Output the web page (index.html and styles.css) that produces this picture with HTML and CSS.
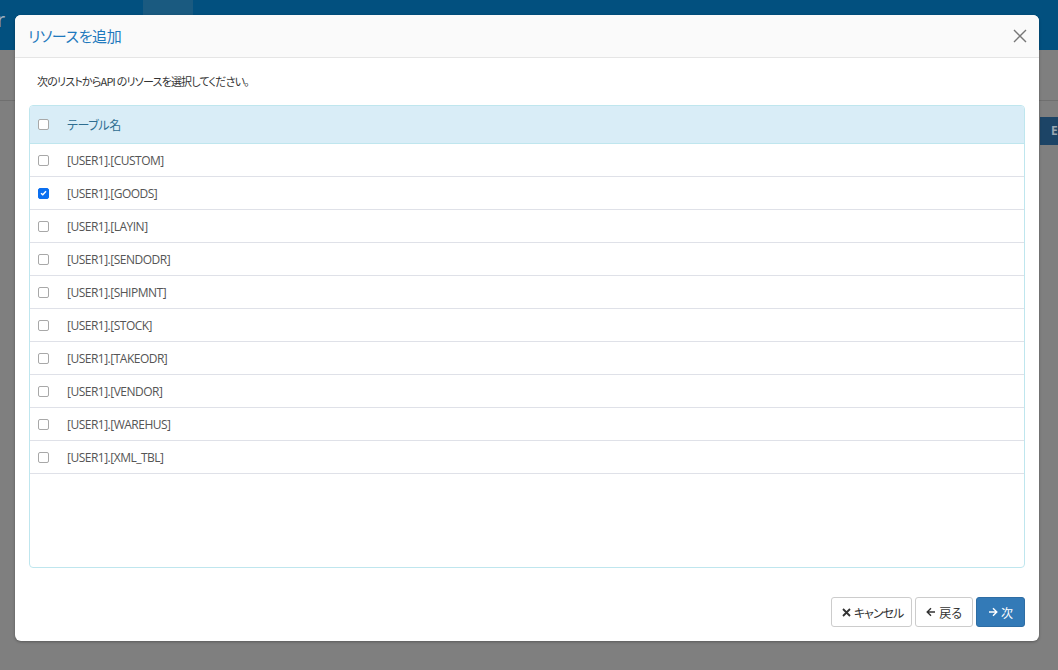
FILE: index.html
```html
<!DOCTYPE html>
<html lang="ja">
<head>
<meta charset="utf-8">
<title>リソースを追加</title>
<link rel="stylesheet" href="styles.css">
</head>
<body>
<div class="page">
  <div class="topbar">
    <span class="brand">r</span>
    <span class="tab"></span>
  </div>
  <div class="subbar"></div>
  <div class="content">
    <span class="side-btn">E</span>
  </div>
</div>

<div class="modal">
  <div class="modal-header">
    <h4 class="modal-title">リソースを追加</h4>
    <span class="close">
      <svg width="14" height="14" viewBox="0 0 14 14"><path d="M1 1L13 13M13 1L1 13" stroke="#777" stroke-width="1.4" fill="none"/></svg>
    </span>
  </div>
  <div class="modal-body">
    <p class="intro">次のリストからAPI のリソースを選択してください。</p>
    <div class="table-box">
      <div class="row head">
        <span class="cb"></span><span class="label">テーブル名</span>
      </div>
      <div class="row"><span class="cb"></span><span class="label">[USER1].[CUSTOM]</span></div>
      <div class="row"><span class="cb checked"><svg width="7" height="6" viewBox="0 0 7 6"><path d="M1 3.2L2.8 4.8L6 1.2" stroke="#fff" stroke-width="1.4" fill="none"/></svg></span><span class="label">[USER1].[GOODS]</span></div>
      <div class="row"><span class="cb"></span><span class="label">[USER1].[LAYIN]</span></div>
      <div class="row"><span class="cb"></span><span class="label">[USER1].[SENDODR]</span></div>
      <div class="row"><span class="cb"></span><span class="label">[USER1].[SHIPMNT]</span></div>
      <div class="row"><span class="cb"></span><span class="label">[USER1].[STOCK]</span></div>
      <div class="row"><span class="cb"></span><span class="label">[USER1].[TAKEODR]</span></div>
      <div class="row"><span class="cb"></span><span class="label">[USER1].[VENDOR]</span></div>
      <div class="row"><span class="cb"></span><span class="label">[USER1].[WAREHUS]</span></div>
      <div class="row"><span class="cb"></span><span class="label">[USER1].[XML_TBL]</span></div>
    </div>
  </div>
  <div class="modal-footer">
    <button class="btn btn-cancel">
      <svg width="9" height="9" viewBox="0 0 9 9"><path d="M1 1L8 8M8 1L1 8" stroke="#333" stroke-width="1.8" fill="none"/></svg><span>キャンセル</span>
    </button>
    <button class="btn">
      <svg width="10" height="10" viewBox="0 0 10 10"><path d="M9 5H1.5M5 1.2L1.2 5L5 8.8" stroke="#333" stroke-width="1.4" fill="none"/></svg><span>戻る</span>
    </button>
    <button class="btn primary">
      <svg width="10" height="10" viewBox="0 0 10 10"><path d="M1 5H8.5M5 1.2L8.8 5L5 8.8" stroke="#fff" stroke-width="1.4" fill="none"/></svg><span>次</span>
    </button>
  </div>
</div>
</body>
</html>
```

FILE: styles.css
```css
* { box-sizing: border-box; }
html, body {
  margin: 0;
  padding: 0;
  height: 100%;
}
body {
  background: #7f7f7f;
  font-family: "Open Sans", "Noto Sans CJK JP", sans-serif;
  overflow: hidden;
}
.page {
  height: 670px;
  display: flex;
  flex-direction: column;
}
.topbar {
  height: 50px;
  background: #02507f;
  display: flex;
  align-items: stretch;
}
.brand {
  color: #9db0bf;
  font-size: 20px;
  margin-left: -3px;
  line-height: 40px;
  width: 146px;
}
.tab {
  width: 50px;
  background: #1a5a80;
}
.subbar {
  height: 51px;
  border-bottom: 1px solid #6f6f6f;
}
.content {
  flex: 1;
  display: flex;
  justify-content: flex-end;
  align-items: flex-start;
  padding-top: 16px;
}
.side-btn {
  width: 18px;
  height: 28px;
  background: #1c4466;
  color: #9aa6b1;
  font-size: 12px;
  font-weight: 700;
  line-height: 28px;
  padding-left: 11px;
  overflow: hidden;
}

.modal {
  position: absolute;
  left: 15px;
  top: 15px;
  width: 1024px;
  height: 626px;
  background: #fff;
  border-radius: 6px;
  display: flex;
  flex-direction: column;
  overflow: hidden;
  box-shadow: 0 1px 3px rgba(0,0,0,0.3);
}
.modal-header {
  height: 43px;
  background: #fafafa;
  border-bottom: 1px solid #e5e5e5;
  display: flex;
  align-items: center;
  justify-content: space-between;
  padding: 0 12px 0 13px;
}
.modal-title {
  margin: 0 0 1px 0;
  font-size: 15px;
  font-weight: 400;
  color: #1e79bd;
  font-family: "Noto Sans CJK JP", sans-serif;
  font-feature-settings: "palt";
  letter-spacing: -0.4px;
}
.close {
  display: flex;
  width: 14px;
  height: 14px;
}
.modal-body {
  flex: 1;
  padding: 14px 14px 0 14px;
  display: flex;
  flex-direction: column;
}
.intro {
  margin: 0 0 0 8px;
  font-family: "Noto Sans CJK JP", sans-serif;
  font-feature-settings: "palt";
  font-size: 11px;
  letter-spacing: -0.8px;
  line-height: 18px;
  color: #333;
  height: 33px;
}
.table-box {
  height: 463px;
  border: 1px solid #bfe6ee;
  border-radius: 4px;
  overflow: hidden;
}
.row {
  height: 33px;
  border-bottom: 1px solid #dfe1e8;
  display: flex;
  align-items: center;
  padding-left: 8px;
}
.row.head {
  height: 38px;
  background: #d9edf7;
  border-bottom: 1px solid #bfe6ee;
}
.row.head .label {
  color: #2f6e91;
  font-family: "Noto Sans CJK JP", sans-serif;
  font-feature-settings: "palt";
  letter-spacing: -0.4px;
}
.cb {
  width: 11px;
  height: 11px;
  border: 1px solid #a8a8a8;
  border-radius: 2px;
  background: #fff;
  display: flex;
  align-items: center;
  justify-content: center;
}
.cb.checked {
  background: #0b6ff0;
  border-color: #0b6ff0;
}
.label {
  margin-left: 18px;
  font-size: 12px;
  letter-spacing: -0.5px;
  color: #555;
}
.modal-footer {
  height: 73px;
  display: flex;
  justify-content: flex-end;
  align-items: flex-start;
  gap: 3px;
  padding: 29px 14px 0 0;
}
.btn {
  height: 30px;
  display: flex;
  align-items: center;
  gap: 3px;
  padding: 0 10px;
  background: #fff;
  border: 1px solid #ccc;
  border-radius: 3px;
  font-family: "Noto Sans CJK JP", sans-serif;
  font-feature-settings: "palt";
  font-size: 12px;
  color: #333;
}
.btn-cancel {
  padding: 0 8px 0 10px;
  letter-spacing: -1px;
}
.btn.primary {
  padding: 0 11px;
  background: #337ab7;
  border-color: #2e6da4;
  color: #fff;
}
```
